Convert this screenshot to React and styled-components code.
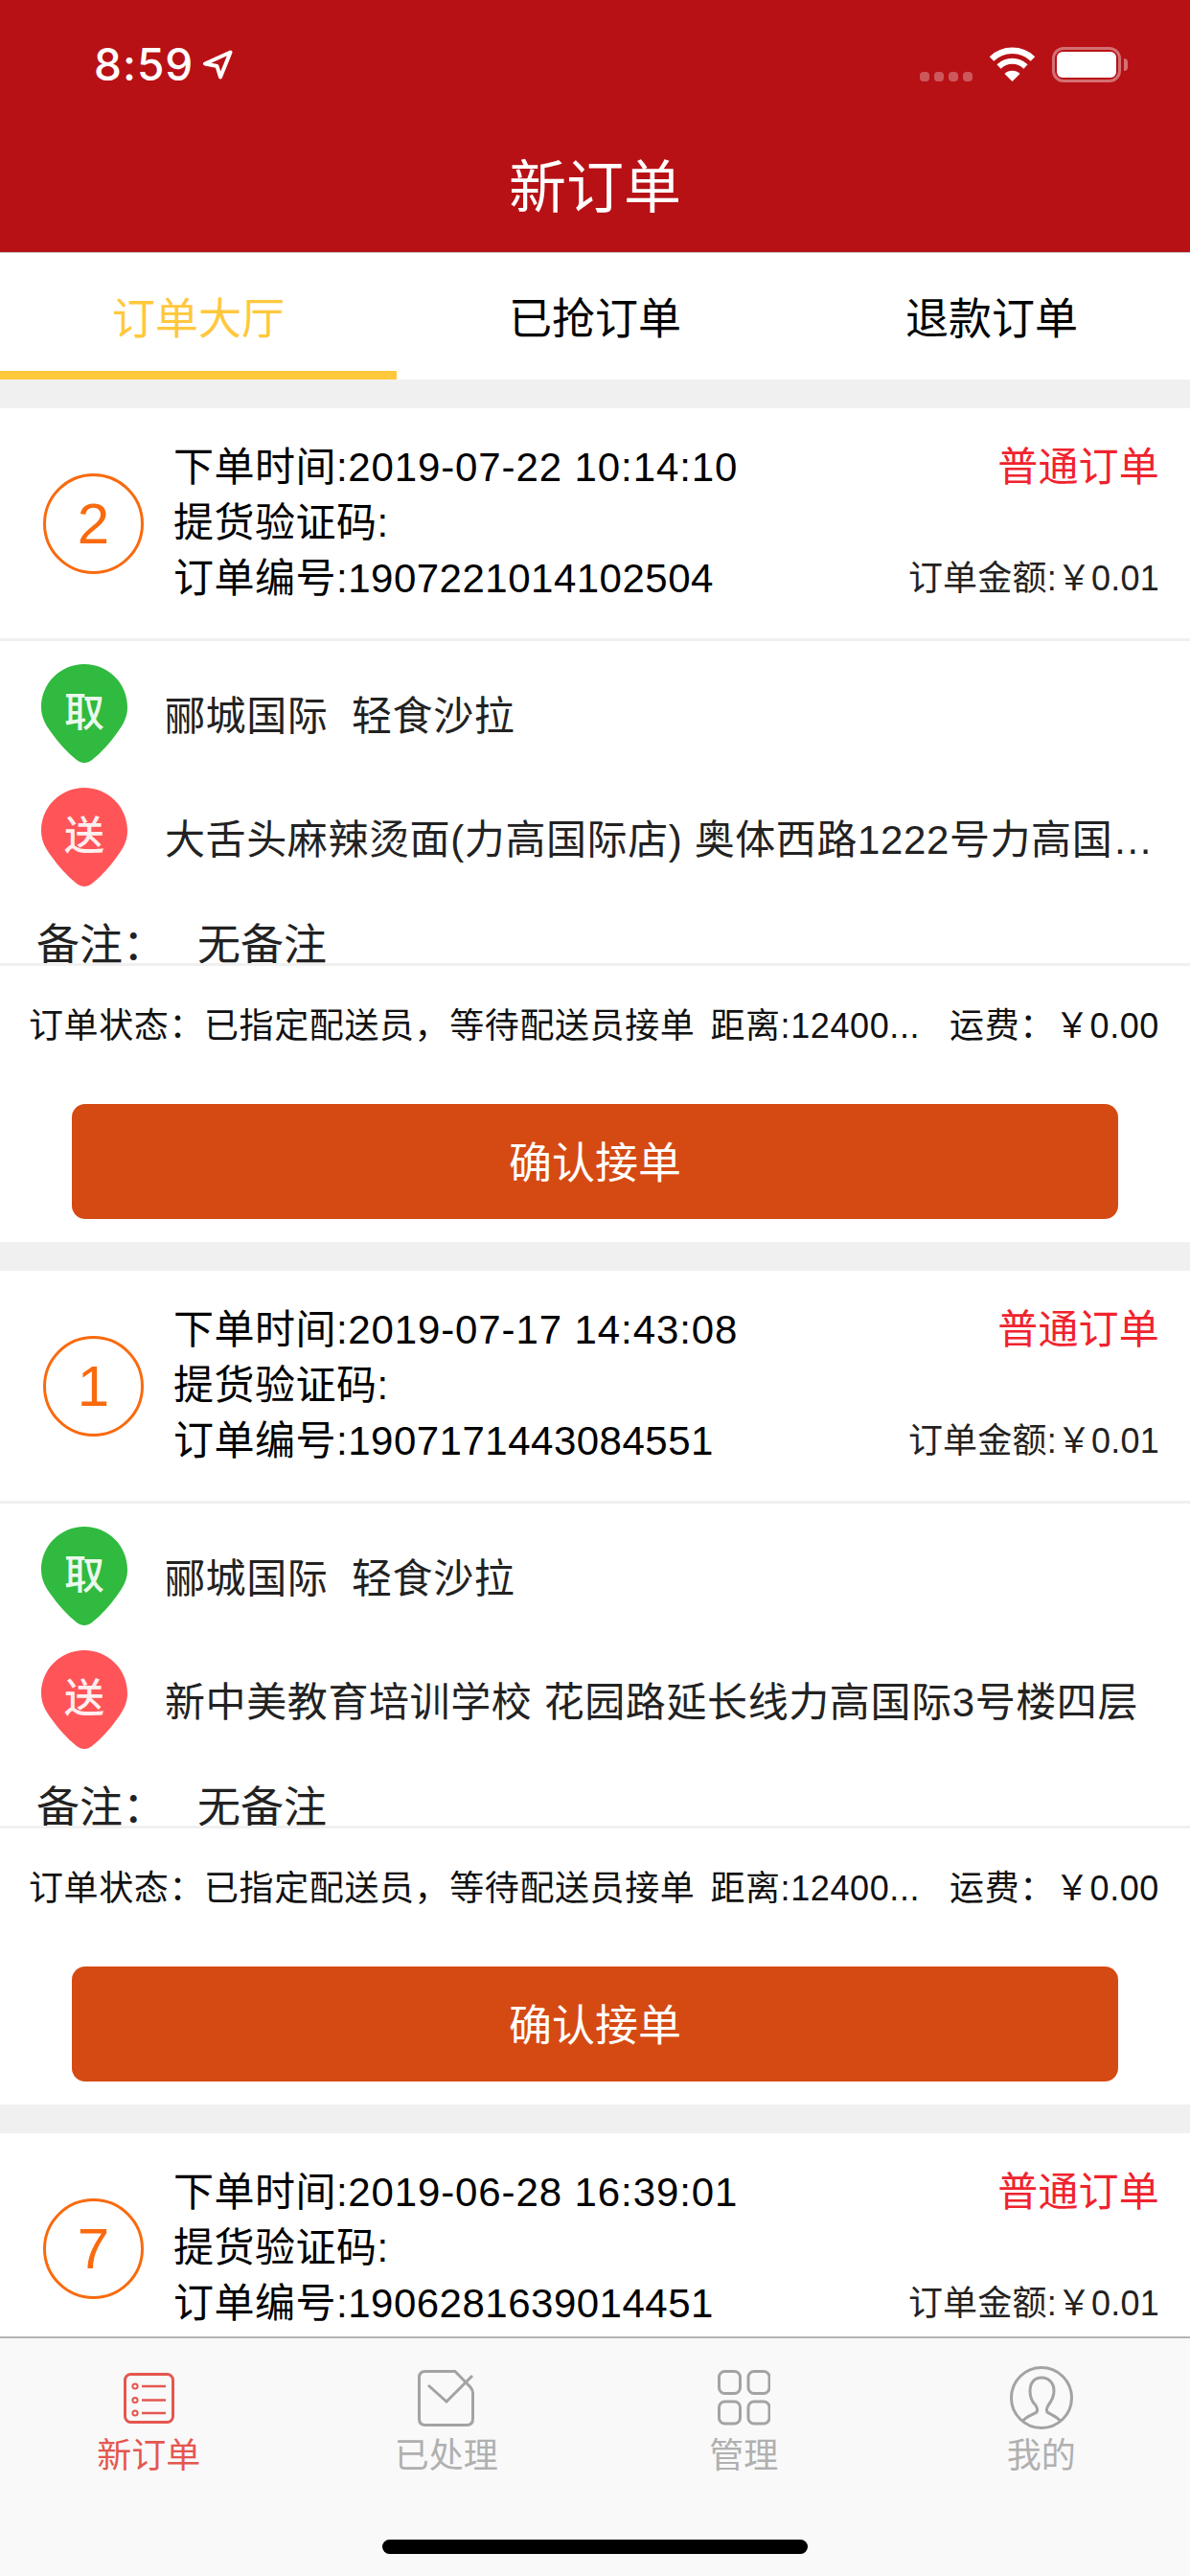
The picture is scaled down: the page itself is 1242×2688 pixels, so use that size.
import styled, { createGlobalStyle } from "styled-components";

const GlobalStyle = createGlobalStyle`
  html, body {
    margin: 0;
    padding: 0;
    background: #f0f0f0;
  }

  * {
    box-sizing: border-box;
  }
`

const orders = [
  {
    id: 1,
    rank: 2,
    time: "2019-07-22 10:14:10",
    no: "1907221014102504",
    shop: "郦城国际  轻食沙拉",
    address: "大舌头麻辣烫面(力高国际店) 奥体西路1222号力高国…",
  },
  {
    id: 2,
    rank: 1,
    time: "2019-07-17 14:43:08",
    no: "1907171443084551",
    shop: "郦城国际  轻食沙拉",
    address: "新中美教育培训学校 花园路延长线力高国际3号楼四层",
  },
  {
    id: 3,
    rank: 7,
    time: "2019-06-28 16:39:01",
    no: "1906281639014451",
  },
]

const navItems = [
  { label: "新订单", Icon: ListIcon, active: true },
  { label: "已处理", Icon: CheckIcon },
  { label: "管理", Icon: GridIcon },
  { label: "我的", Icon: UserIcon },
]

function ArrowIcon() {
  return (
    <ArrowSvg viewBox="0 0 32 31">
      <path d="M29.5 2.5 L3 14.5 L15.5 17 L19 28.5 Z" fill="none" stroke="#fff" strokeWidth="4" strokeLinejoin="round"/>
    </ArrowSvg>
  )
}

function WifiIcon() {
  return (
    <WifiSvg viewBox="0 0 49 36">
      <path d="M3 12.5 A31 31 0 0 1 46 12.5" fill="none" stroke="#fff" strokeWidth="6.5"/>
      <path d="M10.5 20.5 A20 20 0 0 1 38.5 20.5" fill="none" stroke="#fff" strokeWidth="6"/>
      <path d="M16.5 28 A11.5 11.5 0 0 1 32.5 28 L24.5 36 Z" fill="#fff"/>
    </WifiSvg>
  )
}

function Pin({ color, children }) {
  return (
    <PinSvg viewBox="0 0 90 103">
      <path
        d="M45 0 C70 0 90 20 90 45 C90 56 85 64 79 72 C72 82 63 92 53 100 C48 104 42 104 37 100 C27 92 18 82 11 72 C5 64 0 56 0 45 C0 20 20 0 45 0 Z"
        fill={color}
      />
      <PinLabel x="45" y="46" textAnchor="middle" dominantBaseline="central">{children}</PinLabel>
    </PinSvg>
  )
}

function ListIcon() {
  return (
    <svg width="53" height="53" viewBox="0 0 53 53" fill="none" stroke="currentColor">
      <rect x="1.5" y="1.5" width="50" height="50" rx="6" strokeWidth="3"/>
      <circle cx="12" cy="14" r="2.6" strokeWidth="2"/>
      <circle cx="12" cy="28.5" r="2.6" strokeWidth="2"/>
      <circle cx="12" cy="42" r="2.6" strokeWidth="2"/>
      <path d="M19 14 H44 M19 28.5 H44 M19 42 H44" strokeWidth="2.5"/>
    </svg>
  )
}

function CheckIcon() {
  return (
    <svg width="59" height="59" viewBox="0 0 59 59" fill="none" stroke="currentColor">
      <path d="M39 1.5 H8 Q1.5 1.5 1.5 8 V51 Q1.5 57.5 8 57.5 H51 Q57.5 57.5 57.5 51 V24 Q57.5 21 55 18 Z" strokeWidth="3"/>
      <path d="M11 16 L30 33 L57 6" strokeWidth="3"/>
    </svg>
  )
}

function GridIcon() {
  return (
    <svg width="55" height="58" viewBox="0 0 55 58" fill="none" stroke="currentColor" strokeWidth="3">
      <rect x="1.5" y="1.5" width="22" height="23" rx="6"/>
      <rect x="32" y="1.5" width="22" height="23" rx="6"/>
      <rect x="1.5" y="33" width="22" height="23" rx="6"/>
      <rect x="32" y="33" width="22" height="23" rx="6"/>
    </svg>
  )
}

function UserIcon() {
  return (
    <svg width="66" height="66" viewBox="0 0 66 66" fill="none" stroke="currentColor" strokeWidth="3">
      <circle cx="33" cy="33" r="31.5"/>
      <path d="M13 58 C17 52 24 51 28 48 C29 46 29 44 27 41 C23 37 21 32 21 26 C21 17 26 12 33 12 C40 12 46 17 46 26 C46 32 43 37 40 41 C38 44 38 46 39 48 C43 51 49 52 53 58"/>
    </svg>
  )
}

function OrderCard({ order }) {
  return (
    <Card>
      <CardHead>
        <RankCircle>{order.rank}</RankCircle>
        <HeadInfo>
          <div>下单时间:<TimeText>{order.time}</TimeText></div>
          <div>提货验证码:</div>
          <div>订单编号:{order.no}</div>
        </HeadInfo>
        <HeadSide>
          <OrderType>普通订单</OrderType>
          <OrderAmount>订单金额:￥0.01</OrderAmount>
        </HeadSide>
      </CardHead>
      {order.address && (
        <>
          <RouteBlock>
            <RouteRow>
              <Pin color="#30ba3f">取</Pin>
              <RouteText>{order.shop}</RouteText>
            </RouteRow>
            <RouteRow>
              <Pin color="#ff5558">送</Pin>
              <RouteText>{order.address}</RouteText>
            </RouteRow>
            <Remark>备注：<RemarkValue>无备注</RemarkValue></Remark>
          </RouteBlock>
          <StatusRow>
            <span>订单状态：已指定配送员，等待配送员接单</span>
            <Distance>距离:12400...</Distance>
            <Freight>运费：<span>￥0.00</span></Freight>
          </StatusRow>
          <CardFoot>
            <ConfirmButton>确认接单</ConfirmButton>
          </CardFoot>
        </>
      )}
    </Card>
  )
}

function App() {
  return (
    <Page>
      <GlobalStyle/>
      <Header>
        <StatusBar>
          <Clock>8:59</Clock>
          <ArrowIcon/>
          <StatusRight>
            <SignalDots>
              <i/><i/><i/><i/>
            </SignalDots>
            <WifiIcon/>
            <Battery><BatteryFill/></Battery>
          </StatusRight>
        </StatusBar>
        <Title>新订单</Title>
      </Header>
      <Tabs>
        <Tab $active>订单大厅</Tab>
        <Tab>已抢订单</Tab>
        <Tab>退款订单</Tab>
      </Tabs>
      <OrderList>
        {orders.map(order => <OrderCard key={order.id} order={order}/>)}
      </OrderList>
      <TabBar>
        <NavRow>
          {navItems.map(({ label, Icon, active }) => (
            <NavItem key={label} $active={active}>
              <NavIcon><Icon/></NavIcon>
              <NavLabel $active={active}>{label}</NavLabel>
            </NavItem>
          ))}
        </NavRow>
        <HomeBar/>
      </TabBar>
    </Page>
  );
}

const Page = styled.div`
  display: flex;
  flex-direction: column;
  width: 1242px;
  height: 2688px;
  overflow: hidden;
  background: #f0f0f0;
  font-family: "Liberation Sans", "Noto Sans CJK SC", sans-serif;
`

const Header = styled.header`
  flex: none;
  height: 264px;
  background: #b71116;
  border-bottom: 1px solid #c4c4c4;
  color: #fff;
`

const StatusBar = styled.div`
  display: flex;
  align-items: center;
  height: 154px;
  padding: 45px 72px 65px 98px;
`

const Clock = styled.span`
  font-family: Inter, "Liberation Sans", sans-serif;
  font-size: 46px;
  font-weight: 500;
  line-height: 44px;
  letter-spacing: 1px;
`

const ArrowSvg = styled.svg`
  width: 32px;
  height: 31px;
  margin-left: 9px;
`

const StatusRight = styled.div`
  display: flex;
  align-items: center;
  margin-left: auto;
`

const SignalDots = styled.div`
  display: flex;
  gap: 5px;
  margin: 26px 17px 0 0;

  i {
    width: 10px;
    height: 10px;
    border-radius: 4px;
    background: rgba(255, 255, 255, 0.3);
  }
`

const WifiSvg = styled.svg`
  width: 49px;
  height: 36px;
`

const Battery = styled.div`
  position: relative;
  width: 72px;
  height: 37px;
  margin-left: 17px;
  padding: 2px;
  border: 3px solid rgba(255, 255, 255, 0.4);
  border-radius: 12px;

  &::after {
    content: "";
    position: absolute;
    top: 9px;
    right: -10px;
    width: 4px;
    height: 13px;
    border-radius: 0 4px 4px 0;
    background: rgba(255, 255, 255, 0.4);
  }
`

const BatteryFill = styled.div`
  height: 100%;
  border-radius: 6px;
  background: #fff;
`

const Title = styled.h1`
  margin: 0;
  padding-top: 3px;
  font-size: 60px;
  font-weight: 400;
  line-height: 80px;
  text-align: center;
`

const Tabs = styled.nav`
  flex: none;
  display: grid;
  grid-template-columns: repeat(3, 1fr);
  height: 132px;
  background: #fff;
`

const Tab = styled.div`
  display: flex;
  align-items: center;
  justify-content: center;
  padding-top: 7px;
  border-bottom: 9px solid ${props => props.$active ? "#ffc83d" : "transparent"};
  color: ${props => props.$active ? "#ffc83d" : "#000"};
  font-size: 45px;
`

const OrderList = styled.main`
  flex: 1;
  min-height: 0;
  display: flex;
  flex-direction: column;
  gap: 30px;
  padding-top: 30px;
  overflow: hidden;
`

const Card = styled.section`
  flex: none;
  background: #fff;
`

const CardHead = styled.div`
  display: flex;
  align-items: center;
  height: 240px;
  padding: 0 32px 0 45px;
`

const RankCircle = styled.div`
  flex: none;
  display: flex;
  align-items: center;
  justify-content: center;
  width: 105px;
  height: 105px;
  margin-right: 31px;
  border: 3px solid #f96a0e;
  border-radius: 50%;
  color: #f96a0e;
  font-size: 60px;
`

const HeadInfo = styled.div`
  flex: 1;
  color: #000;
  font-size: 42px;
  line-height: 58px;
  letter-spacing: 0.5px;
  white-space: nowrap;
`

const TimeText = styled.span`
  letter-spacing: 0.9px;
`

const HeadSide = styled.div`
  display: flex;
  flex-direction: column;
  justify-content: space-between;
  align-items: flex-end;
  align-self: center;
  height: 174px;
  letter-spacing: 0.2px;
  white-space: nowrap;
`

const OrderType = styled.div`
  color: #f0232e;
  font-size: 42px;
  line-height: 58px;
`

const OrderAmount = styled.div`
  color: #222;
  font-size: 36px;
  line-height: 58px;
`

const RouteBlock = styled.div`
  display: flex;
  flex-direction: column;
  height: 342px;
  padding: 24px 38px 0 43px;
  border-top: 3px solid #f0f0f0;
  border-bottom: 3px solid #f0f0f0;
  overflow: hidden;
`

const RouteRow = styled.div`
  flex: none;
  display: flex;
  align-items: center;
  gap: 39px;
  margin-bottom: 26px;
`

const PinSvg = styled.svg`
  flex: none;
  width: 90px;
  height: 103px;
`

const PinLabel = styled.text`
  fill: #fff;
  fill-opacity: 0.92;
  font-family: "Noto Sans CJK SC", sans-serif;
  font-size: 42px;
  font-weight: 500;
`

const RouteText = styled.div`
  flex: 1;
  min-width: 0;
  padding-bottom: 2px;
  color: #222;
  font-size: 42px;
  letter-spacing: 0.6px;
  white-space: pre;
  overflow: hidden;
  text-overflow: ellipsis;
`

const Remark = styled.div`
  flex: none;
  margin: 6px 0 0 -5px;
  color: #222;
  font-size: 45px;
  line-height: 60px;
  white-space: nowrap;
`

const RemarkValue = styled.span`
  margin-left: 33px;
`

const StatusRow = styled.div`
  display: flex;
  align-items: center;
  height: 118px;
  padding: 0 32px 0 30px;
  color: #111;
  font-size: 36px;
  letter-spacing: 0.6px;
  white-space: nowrap;
`

const Distance = styled.span`
  margin-left: 16px;
`

const Freight = styled.span`
  margin-left: auto;
`

const CardFoot = styled.div`
  padding: 26px 75px 24px;
`

const ConfirmButton = styled.button`
  display: block;
  width: 100%;
  height: 120px;
  padding: 0 0 3px;
  border: 0;
  border-radius: 14px;
  background: #d54a12;
  color: #fff;
  font-family: inherit;
  font-size: 45px;
`

const TabBar = styled.footer`
  flex: none;
  display: flex;
  flex-direction: column;
  align-items: center;
  height: 250px;
  padding-top: 29px;
  background: #f9f9f9;
  border-top: 2px solid #b4b4b4;
`

const NavRow = styled.div`
  display: grid;
  grid-template-columns: repeat(4, 1fr);
  width: 100%;
`

const NavItem = styled.div`
  display: flex;
  flex-direction: column;
  align-items: center;
  color: ${props => props.$active ? "#e4574f" : "#a3a3a3"};
`

const NavIcon = styled.div`
  display: flex;
  align-items: center;
  justify-content: center;
  height: 66px;
`

const NavLabel = styled.span`
  margin-top: 4px;
  color: ${props => props.$active ? "#e4574f" : "#b0b0b0"};
  font-size: 36px;
  line-height: 48px;
`

const HomeBar = styled.div`
  width: 444px;
  height: 15px;
  margin-top: 63px;
  border-radius: 8px;
  background: #000;
`

export default App;
